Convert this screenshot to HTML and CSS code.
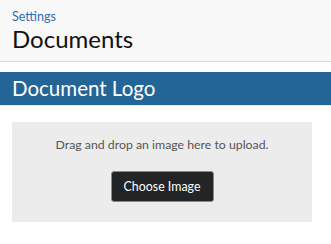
FILE: index.html
```html
<!DOCTYPE html>
<html lang="en">
<head>
  <meta charset="UTF-8" />
  <meta name="viewport" content="width=device-width, initial-scale=1.0"/>
  <title>Documents</title>
  <link rel="stylesheet" href="styles.css">
</head>
<body>

  <div class="page-header">
    <a class="crumb" href="#">Settings</a>
    <h1>Documents</h1>
  </div>

  <div class="section">
    <h2 class="section-title">Document Logo</h2>
    <div class="dropzone">
      <p>Drag and drop an image here to upload.</p>
      <button class="choose-btn">Choose Image</button>
    </div>
  </div>

</body>
</html>
```

FILE: styles.css
```css
* {
  box-sizing: border-box;
}

body {
  font-family: Lato, "Noto Sans", sans-serif;
  margin: 0;
  background: #fff;
  color: #111;
}

.page-header {
  background: #f8f8f8;
  border-bottom: 1px solid #d9d9d9;
  padding: 9px 12px 0;
  height: 62px;
}

.crumb {
  display: block;
  color: #2d6db5;
  font-size: 12.5px;
  line-height: 15px;
  text-decoration: none;
}

.page-header h1 {
  margin: 0;
  font-size: 24px;
  font-weight: 400;
  line-height: 30px;
}

.section {
  margin-top: 10px;
}

.section-title {
  margin: 0;
  background: #236597;
  color: #fff;
  font-size: 20.5px;
  font-weight: 400;
  line-height: 33px;
  padding: 0 12px;
  border-bottom: 1px solid #e4e4e4;
}

.dropzone {
  margin: 16px 19px 0 12px;
  height: 100px;
  background: #ececec;
  display: flex;
  flex-direction: column;
  align-items: center;
  padding-top: 15px;
}

.dropzone p {
  margin: 0;
  font-size: 12.3px;
  line-height: 16px;
  color: #555;
}

.choose-btn {
  margin-top: 18px;
  width: 103px;
  height: 31px;
  background: #222426;
  color: #fff;
  border: 1px solid #8a8a8a;
  border-radius: 3px;
  font-family: inherit;
  font-size: 12.4px;
}
```
